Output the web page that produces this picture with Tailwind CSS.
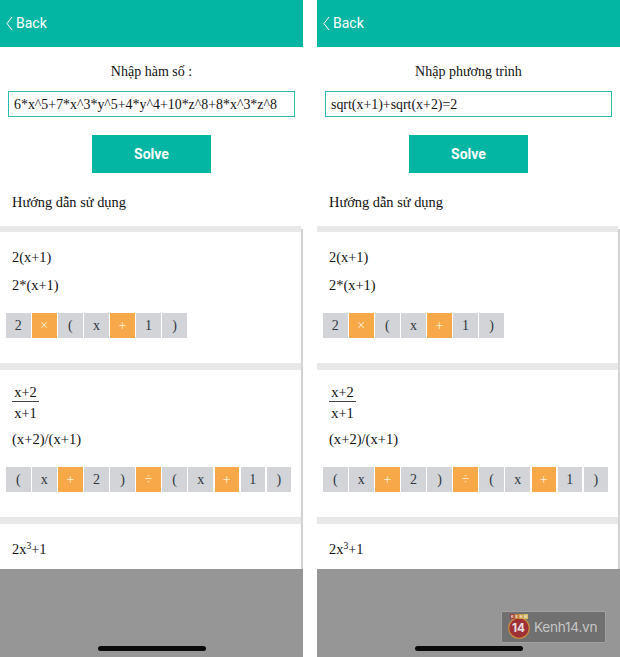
<!DOCTYPE html>
<html lang="vi">
<head>
<meta charset="utf-8">
<title>Solve</title>
<script src="https://cdn.jsdelivr.net/npm/@tailwindcss/browser@4"></script>
</head>
<body class="relative w-[620px] h-[657px] overflow-hidden bg-white">
<main id="screens" class="flex gap-[14px] h-[657px]"></main>

<div class="absolute left-[501px] top-[611px] w-[105px] h-[32px] rounded-[2px] border border-[#a2a2a2] bg-[#707070] flex items-center pl-[5px]">
  <svg class="w-[24px] h-[26px] shrink-0" viewBox="0 0 24 26">
    <circle cx="12" cy="14" r="10.3" fill="#9f3036" stroke="#c98b3c" stroke-width="1.2"/>
    <path d="M3 0h4.500v5H3z" fill="#a23c3c"/><path d="M7.500 0H12v5H7.500z" fill="#c17d38"/><path d="M12 0h4.500v5H12z" fill="#d09a42"/><path d="M16.500 0H21v5h-4.500z" fill="#d5bd67"/>
    <g fill="#f0e6dc" font-family="Roboto, sans-serif" font-weight="700" font-size="4" text-anchor="middle"><text x="5.200" y="4">K</text><text x="9.700" y="4">E</text><text x="14.200" y="4">N</text><text x="18.700" y="4">H</text></g>
    <text x="4.900" y="17.600" fill="#e8e0e0" font-family="Inter, sans-serif" font-weight="700" font-size="12" textLength="13" lengthAdjust="spacingAndGlyphs">14</text>
  </svg>
  <span class="ml-[3px] font-['Inter',sans-serif] text-[13.6px] tracking-[-0.25px] leading-[30px] text-[#c6c6c6] whitespace-nowrap">Kenh14.vn</span>
</div>

<script>
const tile = c => /[+×÷]/.test(c)
  ? `<span class="w-[24.5px] h-[25px] bg-[#f7a848] text-[#fff0d8] text-[14px] leading-[25px] text-center">${c}</span>`
  : `<span class="w-[24.5px] h-[25px] bg-[#d2d4d8] text-[#30383e] text-[14px] leading-[25px] text-center">${c}</span>`;
const tiles = s => `<div class="flex gap-[1.57px] pl-[6px]">${[...s].map(tile).join('')}</div>`;

const screen = (title, value) => `
<section class="w-[303px] h-[657px] shrink-0 flex flex-col bg-white font-['Liberation_Serif','Times_New_Roman',serif] text-[14.4px] text-[#111] whitespace-nowrap">
  <header class="h-[47px] shrink-0 bg-[#03b5a3] text-white flex items-center pl-[6px] font-['Roboto',sans-serif] text-[14px]">
    <svg class="w-[7px] h-[15px]" viewBox="0 0 7 15" fill="none" stroke="#fff" stroke-width="1"><path d="M6 1 1 7.500 6 14"/></svg>
    <span class="ml-[3px]">Back</span>
  </header>
  <div class="h-[44px] shrink-0 pt-[15px] leading-[20px] text-center text-[14px]">${title}</div>
  <div class="mx-[8px] h-[26px] w-[287px] shrink-0 border border-[#2dbbae] pl-[5px] leading-[25px] text-[13.9px]">${value}</div>
  <button class="mt-[18px] ml-[92px] w-[119px] h-[38px] shrink-0 bg-[#03b5a3] text-white font-bold font-['Roboto',sans-serif] text-[14px] leading-[38px]">Solve</button>
  <div class="h-[53px] shrink-0 pt-[19px] pl-[12px] leading-[20px]">Hướng dẫn sử dụng</div>
  <div class="h-[343px] shrink-0 flex">
    <div class="w-[301px] flex flex-col">
      <div class="h-[137px] shrink-0 border-t-[6px] border-[#e8e8e8]">
        <p class="pl-[12px] mt-[15px] leading-[20px]">2(x+1)</p>
        <p class="pl-[12px] mt-[8px] mb-[18px] leading-[20px]">2*(x+1)</p>
        ${tiles('2×(x+1)')}
      </div>
      <div class="h-[154px] shrink-0 border-t-[7px] border-[#e8e8e8]">
        <div class="ml-[12px] mt-[12px] w-[27px] text-center leading-[20px]">
          <p class="h-[20px] border-b border-[#444]">x+2</p>
          <p class="h-[20px] mt-[1px]">x+1</p>
        </div>
        <p class="pl-[12px] mt-[6px] mb-[18px] leading-[20px] text-[14.6px]">(x+2)/(x+1)</p>
        ${tiles('(x+2)÷(x+1)')}
      </div>
      <div class="h-[52px] shrink-0 border-t-[7px] border-[#e8e8e8]">
        <p class="pl-[12px] mt-[15px] leading-[20px]">2x<sup class="text-[9.5px] leading-none">3</sup>+1</p>
      </div>
    </div>
    <div class="w-[2px] mt-[3px] bg-[#d2d2d2]"></div>
  </div>
  <footer class="flex-1 bg-[#969696] flex justify-center items-end pb-[6px]">
    <div class="w-[108px] h-[5px] rounded-full bg-[#0b0b0b]"></div>
  </footer>
</section>`;

document.getElementById('screens').innerHTML =
  screen('Nhập hàm số :', '6*x^5+7*x^3*y^5+4*y^4+10*z^8+8*x^3*z^8') +
  screen('Nhập phương trình', 'sqrt(x+1)+sqrt(x+2)=2');
</script>
</body>
</html>
